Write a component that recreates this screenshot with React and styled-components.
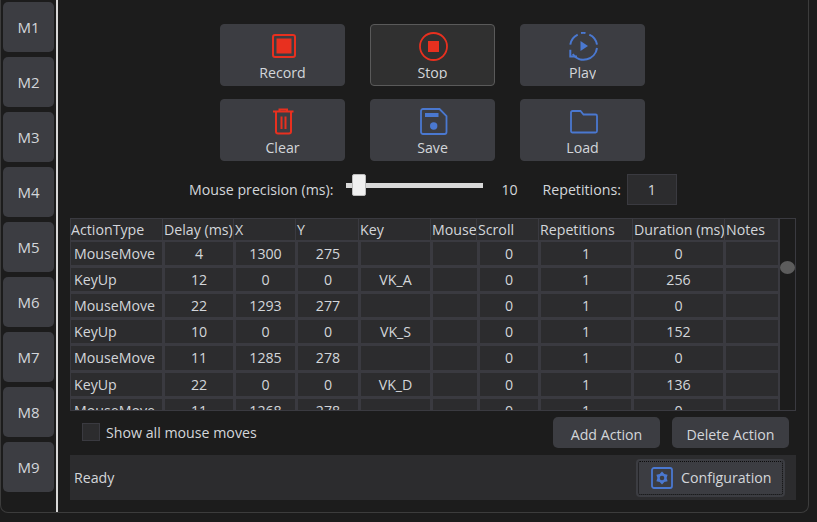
import React from "react"
import styled, { createGlobalStyle } from "styled-components"

const RED = "#e8301f"
const BLUE = "#4a78d0"

const macros = ["M1", "M2", "M3", "M4", "M5", "M6", "M7", "M8", "M9"]
const columns = ["ActionType", "Delay (ms)", "X", "Y", "Key", "Mouse", "Scroll", "Repetitions", "Duration (ms)", "Notes"]
const rows = [
  ["MouseMove", "4", "1300", "275", "", "", "0", "1", "0", ""],
  ["KeyUp", "12", "0", "0", "VK_A", "", "0", "1", "256", ""],
  ["MouseMove", "22", "1293", "277", "", "", "0", "1", "0", ""],
  ["KeyUp", "10", "0", "0", "VK_S", "", "0", "1", "152", ""],
  ["MouseMove", "11", "1285", "278", "", "", "0", "1", "0", ""],
  ["KeyUp", "22", "0", "0", "VK_D", "", "0", "1", "136", ""],
  ["MouseMove", "11", "1268", "278", "", "", "0", "1", "0", ""],
]

const RecordIcon = () => (
  <svg width="30" height="30" viewBox="0 0 30 30">
    <rect x="5" y="3" width="22" height="22" rx="2" fill="none" stroke={RED} strokeWidth="2" />
    <rect x="8.500" y="6.500" width="15" height="15" fill={RED} />
  </svg>
)

const StopIcon = () => (
  <svg width="30" height="30" viewBox="0 0 30 30">
    <circle cx="15.500" cy="14.500" r="13.500" fill="none" stroke={RED} strokeWidth="1.800" />
    <rect x="10" y="9" width="11" height="11" fill={RED} />
  </svg>
)

const PlayIcon = () => (
  <svg width="30" height="30" viewBox="0 0 30 30" fill="none" stroke={BLUE} strokeWidth="2">
    <path d="M2.300 12.700A13.500 13.500 0 0 1 9.700 2.700" />
    <path d="M13 0.900A13.500 13.500 0 0 1 17.500 0.900" />
    <path d="M21.300 2.700A13.500 13.500 0 0 1 29 12.700" />
    <path d="M29 16A13.500 13.500 0 0 1 4.700 22.200" />
    <path d="M2.300 17.700L2.300 24.500L9 24.500" />
    <path d="M12.500 9L20 14L12.500 19Z" fill={BLUE} stroke="none" />
  </svg>
)

const TrashIcon = () => (
  <svg width="30" height="30" viewBox="0 0 30 30" fill="none" stroke={RED} strokeWidth="2">
    <path d="M5 4.500H25.500" />
    <path d="M11.500 4V2.500H19V4" />
    <path d="M8 5V24.500A2 2 0 0 0 10 26.500H21A2 2 0 0 0 23 24.500V5" />
    <path d="M13.500 9.500V22M17.500 9.500V22" />
  </svg>
)

const SaveIcon = () => (
  <svg width="30" height="30" viewBox="0 0 30 30">
    <path d="M3 4A2 2 0 0 1 5 2H21.500L28.500 9V25A2 2 0 0 1 26.500 27H5A2 2 0 0 1 3 25Z" fill="none" stroke={BLUE} strokeWidth="1.800" />
    <rect x="7" y="6" width="13.500" height="4" fill={BLUE} />
    <circle cx="15.700" cy="19" r="3.700" fill={BLUE} />
  </svg>
)

const FolderIcon = () => (
  <svg width="30" height="30" viewBox="0 0 30 30">
    <path d="M3 5.500A1.500 1.500 0 0 1 4.500 4H12.500L15.500 7.500H27.500A1.500 1.500 0 0 1 29 9V24A1.500 1.500 0 0 1 27.500 25.500H4.500A1.500 1.500 0 0 1 3 24Z" fill="none" stroke={BLUE} strokeWidth="1.800" />
  </svg>
)

const GearIcon = () => (
  <svg width="22" height="22" viewBox="0 0 22 22">
    <rect x="1" y="1" width="20" height="20" rx="2" fill="none" stroke={BLUE} strokeWidth="1.800" />
    <path d="M11 4.500L13.300 7L16.600 7.750L15.600 11L16.600 14.250L13.300 15L11 17.500L8.700 15L5.400 14.250L6.400 11L5.400 7.750L8.700 7Z" fill={BLUE} />
    <circle cx="11" cy="11" r="2.300" fill="#3c3d42" />
  </svg>
)

const actions = [
  { label: "Record", icon: <RecordIcon /> },
  { label: "Stop", icon: <StopIcon />, active: true },
  { label: "Play", icon: <PlayIcon /> },
  { label: "Clear", icon: <TrashIcon /> },
  { label: "Save", icon: <SaveIcon /> },
  { label: "Load", icon: <FolderIcon /> },
]

export default function App() {
  return (
    <>
      <GlobalStyle />
      <Window>
        <Sidebar>
          {macros.map((m) => (
            <MacroButton key={m}>{m}</MacroButton>
          ))}
        </Sidebar>

        <Main>
          <ActionGrid>
            {actions.map((a) => (
              <ActionButton key={a.label} $active={a.active}>
                {a.icon}
                <ActionLabel>{a.label}</ActionLabel>
              </ActionButton>
            ))}
          </ActionGrid>

          <SettingsRow>
            <span>Mouse precision (ms):</span>
            <SliderTrack>
              <SliderThumb />
            </SliderTrack>
            <SliderValue>10</SliderValue>
            <span>Repetitions:</span>
            <RepeatBox>1</RepeatBox>
          </SettingsRow>

          <TableFrame>
            <TableClip>
              <Header>
                {columns.map((c) => (
                  <HeaderCell key={c}>{c}</HeaderCell>
                ))}
              </Header>
              <Body>
                {rows.flat().map((value, i) => (
                  <Cell key={i} $first={i % columns.length === 0}>
                    {value}
                  </Cell>
                ))}
              </Body>
            </TableClip>
            <ScrollTrack>
              <ScrollHandle />
            </ScrollTrack>
          </TableFrame>

          <ToolRow>
            <CheckLabel>
              <CheckBox />
              Show all mouse moves
            </CheckLabel>
            <ToolButton $width={107}>Add Action</ToolButton>
            <ToolButton $width={117}>Delete Action</ToolButton>
          </ToolRow>

          <StatusBar>
            <span>Ready</span>
            <ConfigButton>
              <GearIcon />
              Configuration
            </ConfigButton>
          </StatusBar>
        </Main>
      </Window>
    </>
  )
}

const GlobalStyle = createGlobalStyle`
  html, body {
    margin: 0;
    width: 817px;
    height: 522px;
    overflow: hidden;
    background: #1c1c1c;
  }
  * { box-sizing: border-box; }
  body {
    font-family: "Open Sans", "Noto Sans", sans-serif;
    font-size: 14.2px;
    color: #d3d6da;
  }
`

const Window = styled.div`
  display: flex;
  width: 809px;
  height: 513px;
  background: #1c1c1c;
  border-right: 1px solid #3c3c3c;
  border-bottom: 1px solid #3c3c3c;
  border-left: 1px solid #3c3c3c;
  border-bottom-left-radius: 8px;
  border-bottom-right-radius: 8px;
`

const Sidebar = styled.div`
  display: flex;
  flex-direction: column;
  gap: 5px;
  width: 57px;
  padding: 2px 0 0 2px;
  border-right: 2px solid #d8d8d8;
`

const MacroButton = styled.div`
  display: flex;
  align-items: center;
  justify-content: center;
  width: 51px;
  height: 50px;
  background: #3c3d42;
  border-radius: 5px;
  font-size: 15px;
`

const Main = styled.div`
  flex: 1;
  display: flex;
  flex-direction: column;
  padding: 24px 12px 0 12px;
`

const ActionGrid = styled.div`
  display: grid;
  grid-template-columns: repeat(3, 125px);
  gap: 13px 25px;
  margin-left: 150px;
`

const ActionButton = styled.div`
  display: flex;
  flex-direction: column;
  align-items: center;
  height: 62px;
  padding-top: 7px;
  background: ${(p) => (p.$active ? "#303030" : "#3c3d42")};
  border: 1px solid ${(p) => (p.$active ? "#5a5a5a" : "#3c3d42")};
  border-radius: 4px;
`

const ActionLabel = styled.div`
  height: 17px;
  overflow: hidden;
  line-height: 21px;
`

const SettingsRow = styled.div`
  display: flex;
  align-items: center;
  height: 31px;
  margin-top: 13px;
  padding-left: 119px;
`

const SliderTrack = styled.div`
  position: relative;
  width: 137px;
  height: 5px;
  margin-left: 12px;
  margin-top: -9px;
  background: #d8d8d8;
`

const SliderThumb = styled.div`
  position: absolute;
  left: 6px;
  top: -9px;
  width: 14px;
  height: 22px;
  background: #f0f0f0;
  border: 1px solid #bbb;
  border-radius: 2px;
`

const SliderValue = styled.span`
  width: 60px;
  padding-left: 19px;
`

const RepeatBox = styled.div`
  display: flex;
  align-items: center;
  justify-content: center;
  width: 50px;
  height: 31px;
  margin-left: 6px;
  background: #2c2c2e;
  border: 1px solid #3a3a40;
`

const TableFrame = styled.div`
  display: flex;
  width: 726px;
  height: 193px;
  margin-top: 13px;
  border: 1px solid #3a3a40;
`

const TableClip = styled.div`
  width: 708px;
  overflow: hidden;
`

const Header = styled.div`
  display: grid;
  grid-template-columns: 92px 71px 62px 63px 72px 46px 62px 94px 92px 54px;
  height: 21px;
  background: #2c2c2e;
`

const HeaderCell = styled.div`
  padding-left: 1px;
  border-right: 1px solid #3a3a40;
  white-space: nowrap;
  overflow: hidden;
  line-height: 21px;

  &:first-child {
    padding-left: 0;
  }
`

const Body = styled.div`
  display: grid;
  grid-template-columns: 91px 68px 59px 60px 69px 44px 58px 90px 89px 52px;
  grid-auto-rows: 23.2px;
  gap: 3px;
  padding: 1.6px 0 0 0;
  background: #3a3a40;
`

const Cell = styled.div`
  display: flex;
  align-items: center;
  justify-content: ${(p) => (p.$first ? "flex-start" : "center")};
  padding-left: ${(p) => (p.$first ? "3px" : "0")};
  background: #2c2c2e;
`

const ScrollTrack = styled.div`
  flex: 1;
  padding-top: 42px;
  background: #1c1c1c;
  border-left: 1px solid #3a3a40;
`

const ScrollHandle = styled.div`
  width: 15px;
  height: 13px;
  background: #5c5c5c;
  border-radius: 50%;
`

const ToolRow = styled.div`
  display: flex;
  align-items: center;
  gap: 12px;
  width: 719px;
  height: 32px;
  margin-top: 5px;
`

const CheckLabel = styled.div`
  display: flex;
  align-items: center;
  flex: 1;
  gap: 6px;
  padding-left: 12px;
`

const CheckBox = styled.div`
  width: 18px;
  height: 18px;
  background: #2c2c2e;
  border: 1px solid #3a3a40;
`

const ToolButton = styled.div`
  display: flex;
  align-items: center;
  justify-content: center;
  width: ${(p) => p.$width}px;
  height: 31px;
  padding-top: 5px;
  background: #3c3d42;
  border-radius: 5px;
`

const StatusBar = styled.div`
  display: flex;
  align-items: center;
  justify-content: space-between;
  width: 726px;
  height: 45px;
  margin-top: 7px;
  padding: 0 11px 0 4px;
  background: #2c2c2e;
`

const ConfigButton = styled.div`
  display: flex;
  align-items: center;
  gap: 8px;
  width: 149px;
  height: 38px;
  padding-left: 15px;
  background: #3c3d42;
  border-radius: 4px;
  outline: 1px dotted #0c0c0c;
  outline-offset: -3px;
`
